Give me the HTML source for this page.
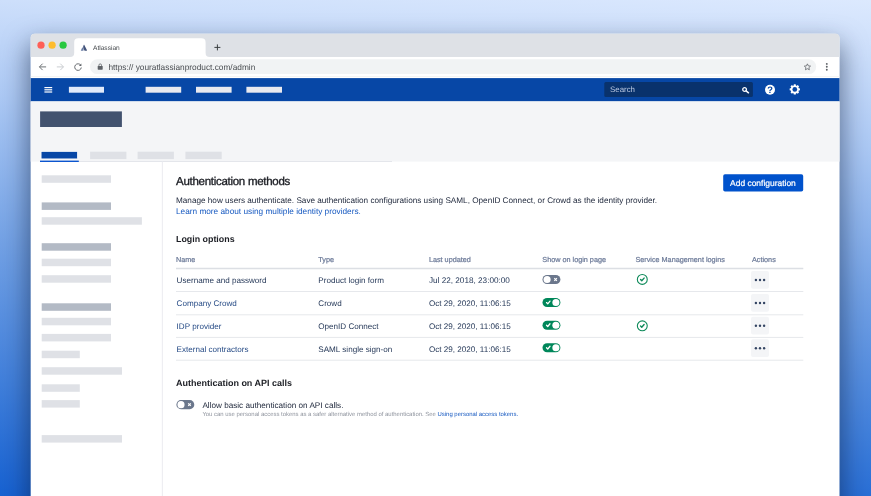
<!DOCTYPE html>
<html lang="en">
<head>
<meta charset="utf-8">
<title>Authentication methods</title>
<style>
*{box-sizing:border-box;margin:0;padding:0}
html,body{width:871px;height:496px;overflow:hidden}
body{font-family:"Liberation Sans",Arial,sans-serif;text-rendering:geometricPrecision;color:#172b4d;position:relative;
 background:linear-gradient(183.3deg,#dce9fe 0%,#cddffb 9.2%,#abc8f4 27.1%,#72a1e5 53.9%,#407fdb 79.5%,#1963d2 98.9%,#1862d2 100%)}
.win{position:absolute;left:30px;top:33px;width:810px;height:481px;border-radius:5px 5px 0 0;background:linear-gradient(rgba(15,28,55,.1),rgba(15,28,55,.28) 60px);
 box-shadow:0 12px 26px 1px rgba(15,28,55,.56);overflow:hidden}
.pg{position:absolute;left:-30px;top:-33px;width:871px;height:520px;will-change:transform}
.shapes{position:absolute;left:0;top:0}
.a{position:absolute;white-space:nowrap;line-height:1}
</style>
</head>
<body>
<div class="win"><div class="pg">
<svg class="shapes" width="871" height="520" viewBox="0 0 871 520">
<!-- browser chrome -->
<rect x="30.7" y="33.7" width="808.8" height="490" rx="3.7" fill="#fff"/>
<path d="M30.7 56.9V37.400a3.700 3.700 0 0 1 3.700-3.700h801.400a3.700 3.700 0 0 1 3.700 3.700v19.500z" fill="#dee1e6"/>
<g transform="translate(31 34)"><circle cx="10" cy="11.2" r="3.6" fill="#fe5f57"/><circle cx="21.1" cy="11.2" r="3.6" fill="#febc2e"/><circle cx="32.1" cy="11.2" r="3.6" fill="#28c840"/></g>
<g transform="translate(70 38)"><path d="M0 18.9c3 0 4.2-1.200 4.2-4.200V4.500c0-2.800 1.200-4.200 4.200-4.200h123c3 0 4.200 1.400 4.200 4.200v10.200c0 3 1.200 4.200 4.200 4.200z" fill="#fff"/></g>
<g transform="translate(80.7 44.5) scale(.47)"><path d="M4.300 6.400c-.3-.4-.8-.3-1 .1L.3 12.600c-.2.400.1.900.6.900h4.200c.3 0 .5-.2.600-.4.900-1.900.4-4.800-1.400-6.700z" fill="#6c7fa6"/><path d="M6.500.9c-1.700 2.700-1.600 5.700-.5 7.900l2 4.100c.1.300.4.400.6.400h4.200c.5 0 .8-.5.600-.9L7.700.9c-.2-.5-.9-.5-1.200 0z" fill="#42537a"/></g>
<g transform="translate(213.9 43.9)"><path d="M3.500.5v6M.5 3.500h6" stroke="#3c4043" stroke-width="1" fill="none"/></g>
<g transform="translate(38.6 62.9)"><path d="M7.500 4H1M4 .8L.8 4 4 7.200" stroke="#5f6368" stroke-width=".9" fill="none"/></g>
<g transform="translate(56.3 62.9)"><path d="M.5 4H7M4 .8L7.200 4 4 7.200" stroke="#c4c7cc" stroke-width=".9" fill="none"/></g>
<g transform="translate(73.8 62.7)"><path d="M7 2.600A3.300 3.300 0 1 0 7.500 4.800" stroke="#5f6368" stroke-width=".95" fill="none"/><path d="M7.600.9v2.500H5.100z" fill="#5f6368"/></g>
<rect x="90" y="59.3" width="726.2" height="14.8" rx="7.4" fill="#f1f3f4"/>
<rect x="30.7" y="76.1" width="808.8" height=".7" fill="#efefee"/>
<g transform="translate(97.7 63.3)"><rect x="0" y="2.600" width="5" height="3.800" rx=".6" fill="#5f6368"/><path d="M1.200 2.800V1.900a1.300 1.300 0 0 1 2.600 0v.9" stroke="#5f6368" stroke-width=".8" fill="none"/></g>
<g transform="translate(803.1 62.6) scale(.3583)"><path d="M12 3.500l2.600 5.600 6.100.7-4.500 4.200 1.200 6-5.400-3-5.400 3 1.200-6L3.300 9.800l6.100-.7z" stroke="#5f6368" stroke-width="2.200" fill="none" stroke-linejoin="round"/></g>
<g transform="translate(826.8 63.9)"><circle r=".95" fill="#5f6368"/><circle cy="2.900" r=".95" fill="#5f6368"/><circle cy="5.800" r=".95" fill="#5f6368"/></g>
<!-- product nav -->
<rect x="30.7" y="78.1" width="808.8" height="23.3" fill="#0747a6"/>
<rect x="44.4" y="87" width="7.8" height="1.2" fill="#fff"/>
<rect x="44.4" y="89.2" width="7.8" height="1.2" fill="#fff"/>
<rect x="44.4" y="91.4" width="7.8" height="1.2" fill="#fff"/>
<rect x="68.9" y="86.8" width="35.1" height="5.9" fill="#e1eafa"/>
<rect x="145.6" y="86.8" width="35.6" height="5.9" fill="#e8e9ef"/>
<rect x="196" y="86.8" width="35.6" height="5.9" fill="#e8e9ef"/>
<rect x="246.4" y="86.8" width="35.6" height="5.9" fill="#e8e9ef"/>
<rect x="604.3" y="82" width="148.6" height="15.1" rx="1.5" fill="#09326c"/>
<g transform="translate(740 85)"><circle cx="4.600" cy="4.500" r="1.850" stroke="#fff" stroke-width="1.300" fill="none"/><path d="M6.100 5.900L8.500 7.800" stroke="#fff" stroke-width="1.500" stroke-linecap="round"/></g>
<g transform="translate(765 84.8)"><circle cx="5" cy="5" r="5" fill="#fff"/><text x="5" y="8.300" text-anchor="middle" font-family="Liberation Sans, sans-serif" font-weight="700" font-size="9.300" fill="#0747a6">?</text></g>
<g transform="translate(794.8 89.4)"><g fill="#fff"><circle r="4"/><rect x="-1.100" y="-5.150" width="2.200" height="10.300" rx=".4"/><rect x="-1.100" y="-5.150" width="2.200" height="10.300" rx=".4" transform="rotate(45)"/><rect x="-1.100" y="-5.150" width="2.200" height="10.300" rx=".4" transform="rotate(90)"/><rect x="-1.100" y="-5.150" width="2.200" height="10.300" rx=".4" transform="rotate(135)"/></g><circle r="2.350" fill="#0747a6"/></g>
<!-- page header -->
<rect x="30.7" y="101.4" width="808.8" height="60.2" fill="#f4f5f7"/>
<rect x="40.1" y="111.4" width="81.8" height="15.6" fill="#42526e"/>
<rect x="40" y="161.1" width="352" height=".9" fill="#e1e4e9"/>
<rect x="41.1" y="151.5" width="36.3" height="7.4" fill="#0747a6" stroke="#fff" stroke-width=".7"/>
<rect x="40" y="160.6" width="38.8" height="1.4" fill="#0b55cf"/>
<rect x="90.1" y="151.7" width="36.3" height="7.4" fill="#dfe1e6"/>
<rect x="137.6" y="151.7" width="36.3" height="7.4" fill="#dfe1e6"/>
<rect x="185.4" y="151.7" width="36.3" height="7.4" fill="#dfe1e6"/>
<!-- sidebar -->
<rect x="161.85" y="161.6" width="1" height="340" fill="#ebecf0"/>
<rect x="41.7" y="175.3" width="69.3" height="7.5" fill="#dfe1e6"/>
<rect x="41.7" y="202.4" width="69.3" height="7.5" fill="#b3bac5"/>
<rect x="41.7" y="217.2" width="100.2" height="7.5" fill="#dfe1e6"/>
<rect x="41.7" y="243.2" width="69.3" height="7.5" fill="#b3bac5"/>
<rect x="41.7" y="258.7" width="69.3" height="7.5" fill="#dfe1e6"/>
<rect x="41.7" y="275.2" width="69.3" height="7.5" fill="#dfe1e6"/>
<rect x="41.7" y="303.3" width="69.3" height="7.5" fill="#b3bac5"/>
<rect x="41.7" y="317.8" width="69.3" height="7.5" fill="#dfe1e6"/>
<rect x="41.7" y="333.9" width="69.3" height="7.5" fill="#dfe1e6"/>
<rect x="41.7" y="350.7" width="38.1" height="7.5" fill="#dfe1e6"/>
<rect x="41.7" y="367.2" width="80.3" height="7.5" fill="#dfe1e6"/>
<rect x="41.7" y="384.3" width="38.1" height="7.5" fill="#dfe1e6"/>
<rect x="41.7" y="400.1" width="38.1" height="7.5" fill="#dfe1e6"/>
<rect x="41.7" y="435.1" width="80.3" height="7.5" fill="#dfe1e6"/>
<!-- main -->
<rect x="723.2" y="174.2" width="80" height="17.4" rx="1.8" fill="#0052cc"/>
<rect x="176" y="267.75" width="627.3" height="1.5" fill="#dcdfe4"/>
<rect x="176" y="291" width="627.3" height="1" fill="#e6e8ec"/>
<rect x="176" y="314.3" width="627.3" height="1" fill="#e6e8ec"/>
<rect x="176" y="336.9" width="627.3" height="1" fill="#e6e8ec"/>
<rect x="176" y="359.7" width="627.3" height="1" fill="#e6e8ec"/>
<!-- row 1 -->
<g transform="translate(542.5 274.95)"><rect width="17.9" height="9.100" rx="4.550" fill="#6b778c"/><circle cx="4.600" cy="4.550" r="3.550" fill="#fff"/><path d="M11.800 3.250l2.600 2.600M14.400 3.250l-2.600 2.600" stroke="#fff" stroke-width="1.150" fill="none"/></g>
<g transform="translate(642.3 279.4)"><circle r="4.950" stroke="#0e8a5a" stroke-width="1.100" fill="#fff"/><path d="M-1.750 .2l1.200 1.200L1.800-1.300" stroke="#0e8a5a" stroke-width="1.400" fill="none" stroke-linecap="round" stroke-linejoin="round"/></g>
<rect x="751" y="271.1" width="18" height="17.7" rx="2" fill="#f4f5f7"/>
<g transform="translate(754 278)"><circle cx="1.900" cy="2" r="1.200" fill="#344563"/><circle cx="6" cy="2" r="1.200" fill="#344563"/><circle cx="10.100" cy="2" r="1.200" fill="#344563"/></g>
<!-- row 2 -->
<g transform="translate(542.5 297.95)"><rect width="17.9" height="9.100" rx="4.550" fill="#00875a"/><circle cx="13.400" cy="4.550" r="3.550" fill="#fff"/><path d="M4 4.600l1.250 1.250L7.500 3.100" stroke="#fff" stroke-width="1.250" fill="none" stroke-linecap="round" stroke-linejoin="round"/></g>
<rect x="751" y="294.1" width="18" height="17.7" rx="2" fill="#f4f5f7"/>
<g transform="translate(754 301)"><circle cx="1.900" cy="2" r="1.200" fill="#344563"/><circle cx="6" cy="2" r="1.200" fill="#344563"/><circle cx="10.100" cy="2" r="1.200" fill="#344563"/></g>
<!-- row 3 -->
<g transform="translate(542.5 320.65)"><rect width="17.9" height="9.100" rx="4.550" fill="#00875a"/><circle cx="13.400" cy="4.550" r="3.550" fill="#fff"/><path d="M4 4.600l1.250 1.250L7.500 3.100" stroke="#fff" stroke-width="1.250" fill="none" stroke-linecap="round" stroke-linejoin="round"/></g>
<g transform="translate(642.3 325.8)"><circle r="4.950" stroke="#0e8a5a" stroke-width="1.100" fill="#fff"/><path d="M-1.750 .2l1.200 1.200L1.800-1.300" stroke="#0e8a5a" stroke-width="1.400" fill="none" stroke-linecap="round" stroke-linejoin="round"/></g>
<rect x="751" y="316.8" width="18" height="17.7" rx="2" fill="#f4f5f7"/>
<g transform="translate(754 323.7)"><circle cx="1.900" cy="2" r="1.200" fill="#344563"/><circle cx="6" cy="2" r="1.200" fill="#344563"/><circle cx="10.100" cy="2" r="1.200" fill="#344563"/></g>
<!-- row 4 -->
<g transform="translate(542.5 343.15)"><rect width="17.9" height="9.100" rx="4.550" fill="#00875a"/><circle cx="13.400" cy="4.550" r="3.550" fill="#fff"/><path d="M4 4.600l1.250 1.250L7.500 3.100" stroke="#fff" stroke-width="1.250" fill="none" stroke-linecap="round" stroke-linejoin="round"/></g>
<rect x="751" y="339.3" width="18" height="17.7" rx="2" fill="#f4f5f7"/>
<g transform="translate(754 346.2)"><circle cx="1.900" cy="2" r="1.200" fill="#344563"/><circle cx="6" cy="2" r="1.200" fill="#344563"/><circle cx="10.100" cy="2" r="1.200" fill="#344563"/></g>
<!-- API section -->
<g transform="translate(176.4 400.1)"><rect width="17.9" height="9.100" rx="4.550" fill="#6b778c"/><circle cx="4.600" cy="4.550" r="3.550" fill="#fff"/><path d="M11.800 3.250l2.600 2.600M14.400 3.250l-2.600 2.600" stroke="#fff" stroke-width="1.150" fill="none"/></g>
</svg>
<div class="a" style="left:93px;top:46.1px;font-size:6.6px;color:#45494d">Atlassian</div>
<div class="a" style="left:108.4px;top:63px;font-size:8.32px;color:#4a4e52">https:// youratlassianproduct.com/admin</div>
<div class="a" style="left:610px;top:86.1px;font-size:7.9px;color:#b9c7e0">Search</div>
<div class="a" style="left:176px;top:177px;font-size:11.5px;color:#1c1e24;letter-spacing:-.28px;-webkit-text-stroke:.35px #1c1e24">Authentication methods</div>
<div class="a" style="left:730.1px;top:178.6px;font-size:8.45px;color:#fff;-webkit-text-stroke:.2px #fff">Add configuration</div>
<div class="a" style="left:176px;top:196.7px;font-size:8.19px;color:#1b2438">Manage how users authenticate. Save authentication configurations using SAML, OpenID Connect, or Crowd as the identity provider.</div>
<div class="a" style="left:176px;top:207.9px;font-size:8.25px;color:#1558c0">Learn more about using multiple identity providers.</div>
<div class="a" style="left:176px;top:234.5px;font-size:8.87px;color:#1c1e24;font-weight:700">Login options</div>
<div class="a" style="left:176px;top:256px;font-size:7.25px;color:#6d7b99;-webkit-text-stroke:.22px #6d7b99">Name</div>
<div class="a" style="left:318.3px;top:256px;font-size:7.25px;color:#6d7b99;-webkit-text-stroke:.22px #6d7b99">Type</div>
<div class="a" style="left:428.9px;top:256px;font-size:7.25px;color:#6d7b99;-webkit-text-stroke:.22px #6d7b99">Last updated</div>
<div class="a" style="left:542.3px;top:256px;font-size:7.25px;color:#6d7b99;-webkit-text-stroke:.22px #6d7b99">Show on login page</div>
<div class="a" style="left:635.4px;top:256px;font-size:7.25px;color:#6d7b99;-webkit-text-stroke:.22px #6d7b99">Service Management logins</div>
<div class="a" style="left:752px;top:256px;font-size:7.25px;color:#6d7b99;-webkit-text-stroke:.22px #6d7b99">Actions</div>
<div class="a" style="left:176.6px;top:276.9px;font-size:8.1px;color:#253858">Username and password</div>
<div class="a" style="left:318.3px;top:276.9px;font-size:8.1px;color:#253858">Product login form</div>
<div class="a" style="left:428.9px;top:276.9px;font-size:8.2px;color:#253858">Jul 22, 2018, 23:00:00</div>
<div class="a" style="left:176.6px;top:300px;font-size:8.1px;color:#254a85">Company Crowd</div>
<div class="a" style="left:318.3px;top:300px;font-size:8.1px;color:#253858">Crowd</div>
<div class="a" style="left:428.9px;top:300px;font-size:8.1px;color:#253858">Oct 29, 2020, 11:06:15</div>
<div class="a" style="left:176.6px;top:322.8px;font-size:8.1px;color:#254a85">IDP provider</div>
<div class="a" style="left:318.3px;top:322.8px;font-size:8.1px;color:#253858">OpenID Connect</div>
<div class="a" style="left:428.9px;top:322.8px;font-size:8.1px;color:#253858">Oct 29, 2020, 11:06:15</div>
<div class="a" style="left:176.6px;top:345.9px;font-size:8.1px;color:#254a85">External contractors</div>
<div class="a" style="left:318.3px;top:345.9px;font-size:8.1px;color:#253858">SAML single sign-on</div>
<div class="a" style="left:428.9px;top:345.9px;font-size:8.1px;color:#253858">Oct 29, 2020, 11:06:15</div>
<div class="a" style="left:176px;top:379.1px;font-size:8.99px;color:#1c1e24;font-weight:700">Authentication on API calls</div>
<div class="a" style="left:202.4px;top:401.8px;font-size:8.16px;color:#1b2438">Allow basic authentication on API calls.</div>
<div class="a" style="left:202.4px;top:413px;font-size:5.94px;color:#8f949e">You can use personal access tokens as a safer alternative method of authentication. See <span style="color:#1558c0">Using personal access tokens.</span></div>
</div></div>
</body>
</html>
